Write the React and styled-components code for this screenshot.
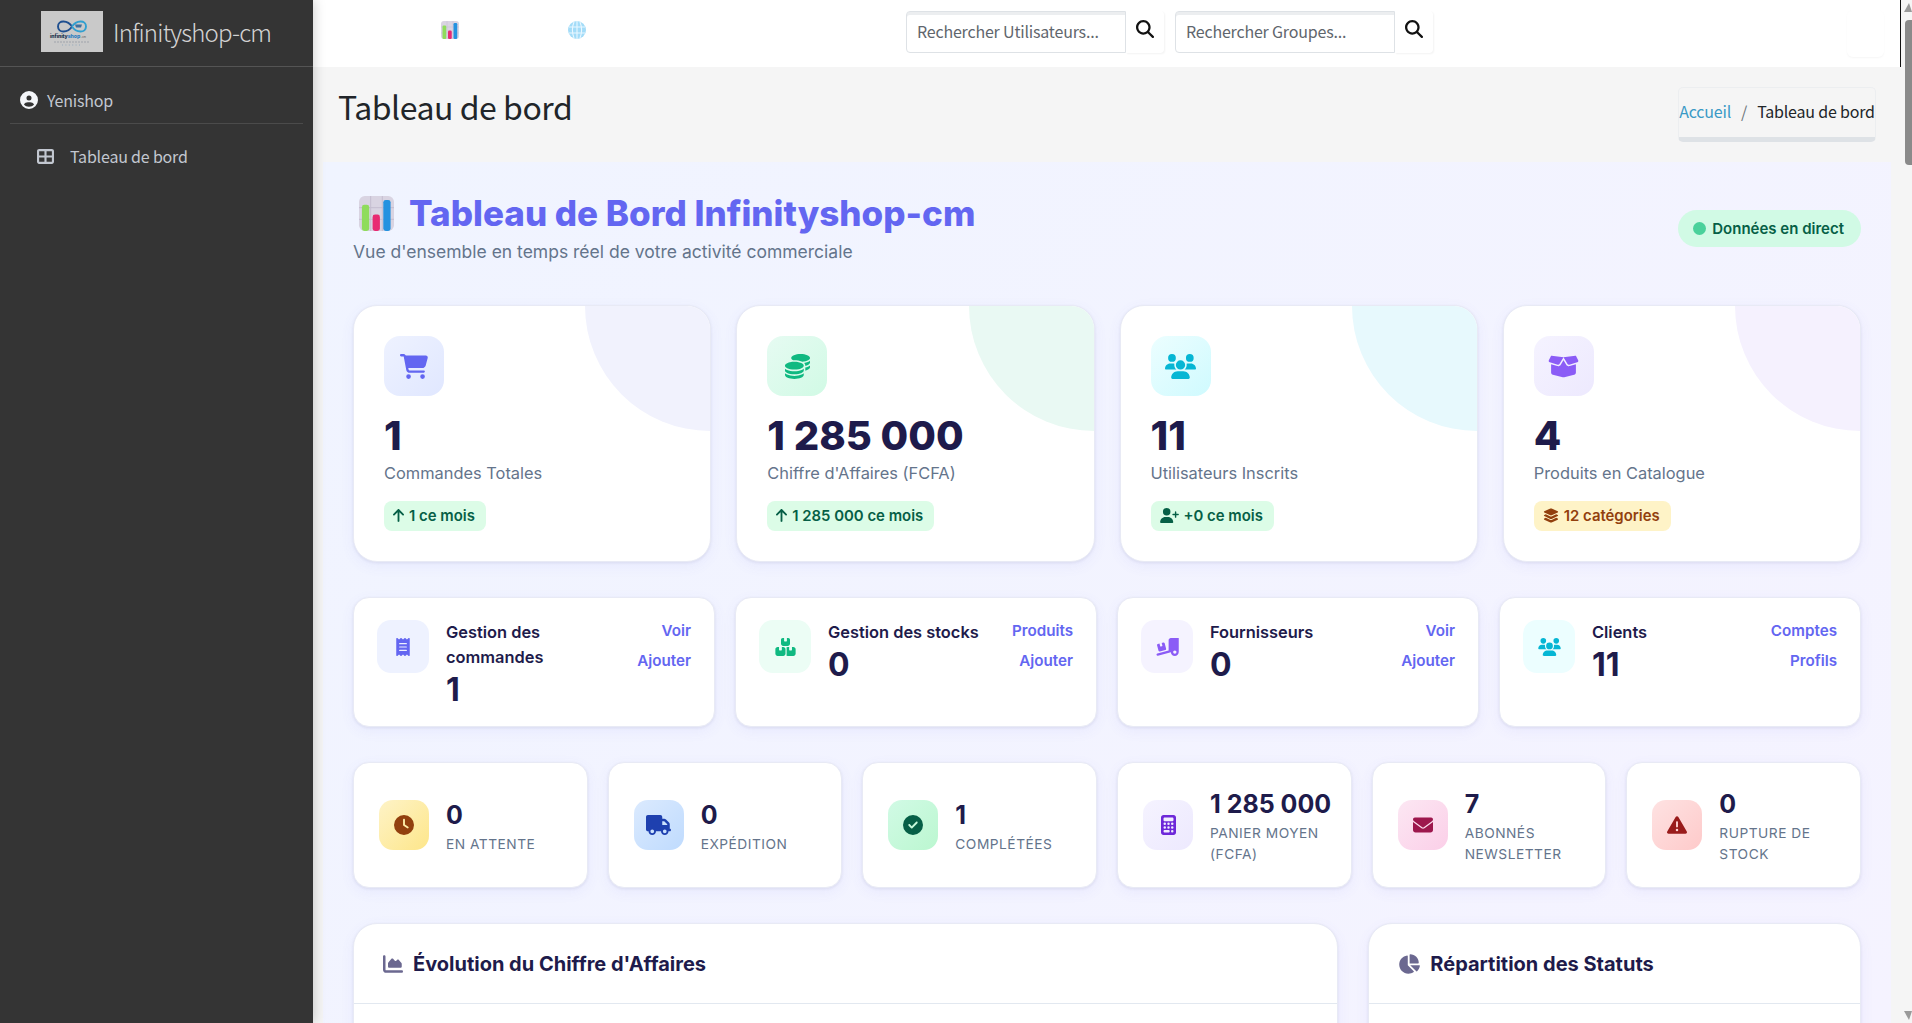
import styled, { createGlobalStyle } from 'styled-components';
import {
  FaArrowUp,
  FaBoxesStacked,
  FaBoxOpen,
  FaCalculator,
  FaCartShopping,
  FaChartArea,
  FaChartPie,
  FaCircleCheck,
  FaCircleUser,
  FaClock,
  FaCoins,
  FaEnvelope,
  FaLayerGroup,
  FaMagnifyingGlass,
  FaReceipt,
  FaTableCellsLarge,
  FaTriangleExclamation,
  FaTruck,
  FaTruckRampBox,
  FaUserPlus,
  FaUsers,
} from 'react-icons/fa6';

const GlobalStyle = createGlobalStyle`
  html, body {
    margin: 0;
    height: 100%;
    overflow: hidden;
    background: #f5f5f5;
    font-family: "Noto Sans CJK SC", "Noto Sans", sans-serif;
    letter-spacing: -0.012em;
  }
  * { box-sizing: border-box; }
`;

const inter = `Inter, "Liberation Sans", sans-serif`;

// w / bw: icon widths, the font awesome glyphs are not square
const stats = [
  { icon: <FaCartShopping />, w: 28, value: '1', label: 'Commandes Totales', from: '#eef2ff', to: '#e0e7ff', color: '#6366f1', blob: '#f1f2fd', badge: 'green', badgeIcon: <FaArrowUp />, bw: 11, badgeText: '1 ce mois' },
  { icon: <FaCoins />, w: 25, value: '1 285 000', label: "Chiffre d'Affaires (FCFA)", from: '#e6fbf2', to: '#d1fae5', color: '#10b981', blob: '#e9f9f3', badge: 'green', badgeIcon: <FaArrowUp />, bw: 11, badgeText: '1 285 000 ce mois' },
  { icon: <FaUsers />, w: 31, value: '11', label: 'Utilisateurs Inscrits', from: '#ecfeff', to: '#cffafe', color: '#06b6d4', blob: '#e7f9fd', badge: 'green', badgeIcon: <FaUserPlus />, bw: 19, badgeText: '+0 ce mois' },
  { icon: <FaBoxOpen />, w: 31, value: '4', label: 'Produits en Catalogue', from: '#f5f3ff', to: '#ede9fe', color: '#8b5cf6', blob: '#f5f1fe', badge: 'amber', badgeIcon: <FaLayerGroup />, bw: 16, badgeText: '12 catégories' },
];

const modules = [
  { icon: <FaReceipt />, w: 14, bg: '#eef2ff', color: '#6366f1', title: 'Gestion des commandes', value: '1', links: ['Voir', 'Ajouter'] },
  { icon: <FaBoxesStacked />, w: 21, bg: '#ecfdf5', color: '#10b981', title: 'Gestion des stocks', value: '0', links: ['Produits', 'Ajouter'] },
  { icon: <FaTruckRampBox />, w: 23, bg: '#f5f3ff', color: '#8b5cf6', title: 'Fournisseurs', value: '0', links: ['Voir', 'Ajouter'] },
  { icon: <FaUsers />, w: 23, bg: '#ecfeff', color: '#06b6d4', title: 'Clients', value: '11', links: ['Comptes', 'Profils'] },
];

const tiles = [
  { icon: <FaClock />, w: 20, from: '#fef3c7', to: '#fde68a', color: '#92400e', value: '0', label: 'En attente' },
  { icon: <FaTruck />, w: 25, from: '#dbeafe', to: '#bfdbfe', color: '#1e40af', value: '0', label: 'Expédition' },
  { icon: <FaCircleCheck />, w: 20, from: '#d1fae5', to: '#bbf7d0', color: '#065f46', value: '1', label: 'Complétées' },
  { icon: <FaCalculator />, w: 15, from: '#f5f3ff', to: '#ede9fe', color: '#6d28d9', value: '1 285 000', label: 'Panier moyen (FCFA)' },
  { icon: <FaEnvelope />, w: 20, from: '#fce7f3', to: '#fbcfe8', color: '#9d174d', value: '7', label: 'Abonnés Newsletter' },
  { icon: <FaTriangleExclamation />, w: 22, from: '#fee2e2', to: '#fecaca', color: '#991b1b', value: '0', label: 'Rupture de stock' },
];

const LogoMark = () => (
  <Logo viewBox="0 0 62 41" aria-label="Infinityshop">
    <rect width="62" height="41" fill="#c9c9c9" />
    <path d="M31 15.5C27 9 17 8.5 17 15.5S27 22 31 15.5" fill="none" stroke="#1f4f8f" strokeWidth="1.9" />
    <path d="M31 15.5C35 9 45 8.5 45 15.5S35 22 31 15.5" fill="none" stroke="#2f9fd0" strokeWidth="1.9" />
    <path d="M34 13.5h7l-1 3h-5z" fill="#3c6f9f" />
    <text x="9" y="27" fontFamily="Inter, sans-serif" fontSize="5.2" fontWeight="800" letterSpacing="-0.1" fill="#22324f">
      infinity<tspan fill="#2f7fc0">shop</tspan>
      <tspan fontSize="2.8" fontWeight="400" fill="#555"> -cm</tspan>
    </text>
    <path d="M13 31h36" stroke="#8d949e" strokeWidth=".7" strokeDasharray="2 1" />
    <path d="M21 34h20" stroke="#8ea6bb" strokeWidth=".9" strokeDasharray="1 2.4" />
  </Logo>
);

// bar chart emoji, the system one is not available here
const ChartEmoji = ({ size }) => (
  <svg width={size} height={size} viewBox="0 0 36 36">
    <rect width="36" height="36" rx="6" fill="#d9d4e2" />
    <path d="M0 12h36M0 24h36M12 0v36M24 0v36" stroke="#c4bdd0" strokeWidth="1" />
    <rect x="3" y="9" width="7.5" height="27" rx="2.5" fill="#8fdc5c" />
    <rect x="14" y="19" width="7.5" height="17" rx="2.5" fill="#e82a72" />
    <rect x="25" y="4" width="7.5" height="32" rx="2.5" fill="#2492e0" />
  </svg>
);

const GlobeEmoji = () => (
  <svg width="18" height="18" viewBox="0 0 18 18">
    <circle cx="9" cy="9" r="9" fill="#a3dcf8" />
    <path d="M1 6h16M1 12h16M6 1c-2 5-2 11 0 16M12 1c2 5 2 11 0 16M9 0v18" stroke="#eaf7ff" strokeWidth="1.1" fill="none" />
  </svg>
);

const App = () => {
  return (
    <Page>
      <GlobalStyle />
      <Sidebar>
        <Brand>
          <LogoMark />
          <BrandName>Infinityshop-cm</BrandName>
        </Brand>
        <UserPanel>
          <FaCircleUser />
          <span>Yenishop</span>
        </UserPanel>
        <MenuItem>
          <FaTableCellsLarge />
          <span>Tableau de bord</span>
        </MenuItem>
      </Sidebar>

      <Main>
        <Header>
          <NavIcons>
            <ChartEmoji size={18} />
            <GlobeEmoji />
          </NavIcons>
          <Searches>
            <SearchGroup>
              <SearchInput placeholder="Rechercher Utilisateurs..." />
              <SearchButton><FaMagnifyingGlass /></SearchButton>
            </SearchGroup>
            <SearchGroup>
              <SearchInput placeholder="Rechercher Groupes..." />
              <SearchButton><FaMagnifyingGlass /></SearchButton>
            </SearchGroup>
          </Searches>
          <CornerButton />
        </Header>

        <TitleBar>
          <PageTitle>Tableau de bord</PageTitle>
          <Breadcrumb>
            <a href="#accueil">Accueil</a>
            <Slash>/</Slash>
            <span>Tableau de bord</span>
          </Breadcrumb>
        </TitleBar>

        <Dashboard>
          <Hero>
            <div>
              <HeroTitle>
                <ChartEmoji size={35} />
                <span>Tableau de Bord Infinityshop-cm</span>
              </HeroTitle>
              <HeroSub>Vue d'ensemble en temps réel de votre activité commerciale</HeroSub>
            </div>
            <LivePill>
              <LiveDot />
              Données en direct
            </LivePill>
          </Hero>

          <StatsGrid>
            {stats.map((s) => (
              <StatCard key={s.label} $blob={s.blob}>
                <StatIcon $from={s.from} $to={s.to} $color={s.color} $w={s.w}>{s.icon}</StatIcon>
                <StatValue>{s.value}</StatValue>
                <StatLabel>{s.label}</StatLabel>
                <Badge $kind={s.badge} $w={s.bw}>
                  {s.badgeIcon}
                  {s.badgeText}
                </Badge>
              </StatCard>
            ))}
          </StatsGrid>

          <ModulesGrid>
            {modules.map((m) => (
              <ModuleCard key={m.title}>
                <ModuleIcon $bg={m.bg} $color={m.color} $w={m.w}>{m.icon}</ModuleIcon>
                <ModuleBody>
                  <ModuleTitle>{m.title}</ModuleTitle>
                  <ModuleValue>{m.value}</ModuleValue>
                </ModuleBody>
                <ModuleLinks>
                  {m.links.map((l) => (
                    <a key={l} href="#lien">{l}</a>
                  ))}
                </ModuleLinks>
              </ModuleCard>
            ))}
          </ModulesGrid>

          <TilesGrid>
            {tiles.map((t) => (
              <Tile key={t.label}>
                <TileIcon $from={t.from} $to={t.to} $color={t.color} $w={t.w}>{t.icon}</TileIcon>
                <TileText>
                  <TileValue>{t.value}</TileValue>
                  <TileLabel>{t.label}</TileLabel>
                </TileText>
              </Tile>
            ))}
          </TilesGrid>

          <ChartsGrid>
            <ChartCard>
              <ChartHead $w={20}>
                <FaChartArea />
                Évolution du Chiffre d'Affaires
              </ChartHead>
            </ChartCard>
            <ChartCard>
              <ChartHead $w={22}>
                <FaChartPie />
                Répartition des Statuts
              </ChartHead>
            </ChartCard>
          </ChartsGrid>
        </Dashboard>
      </Main>

      <ScrollTrack>
        <ScrollArrow />
        <ScrollThumb />
        <ScrollArrow $down />
      </ScrollTrack>
    </Page>
  );
};

export default App;

const Page = styled.div`
  display: flex;
  height: 100vh;
  overflow: hidden;
`;

/* sidebar */
const Sidebar = styled.aside`
  position: relative;
  z-index: 2;
  flex: 0 0 313px;
  background: #343434;
  box-shadow: 0 0 12px rgba(0, 0, 0, 0.22);
`;

const Brand = styled.div`
  display: flex;
  align-items: center;
  gap: 10px;
  height: 67px;
  padding: 0 0 3px 41px;
  border-bottom: 1px solid #545454;
`;

const Logo = styled.svg`
  width: 62px;
  height: 41px;
  flex: none;
`;

const BrandName = styled.span`
  color: rgba(255, 255, 255, 0.8);
  font-size: 24px;
  font-weight: 300;
  letter-spacing: -0.8px;
`;

const UserPanel = styled.div`
  display: flex;
  align-items: center;
  gap: 9px;
  height: 57px;
  margin: 0 10px;
  padding: 9px 0 0 10px;
  border-bottom: 1px solid #4b4b4b;
  color: #c2c7d0;
  font-size: 16px;

  svg {
    height: 18px;
    width: 18px;
    color: #f4f6f9;
  }
`;

const MenuItem = styled.div`
  display: flex;
  align-items: center;
  gap: 15px;
  margin-top: 20px;
  padding-left: 36px;
  color: #c2c7d0;
  font-size: 16px;

  svg {
    height: 17px;
    width: 19px;
  }
`;

/* top bar */
const Main = styled.main`
  flex: 1;
  min-width: 0;
  display: flex;
  flex-direction: column;
`;

const Header = styled.header`
  flex: 0 0 67px;
  display: flex;
  align-items: flex-start;
  background: #fff;
  border-right: 1px solid #111;
`;

const NavIcons = styled.div`
  display: flex;
  align-items: center;
  gap: 109px;
  margin: 21px 0 0 128px;
`;

const Searches = styled.div`
  display: flex;
  gap: 11px;
  margin: 11px 0 0 320px;
`;

const SearchGroup = styled.form`
  display: flex;
`;

const SearchInput = styled.input`
  width: 220px;
  height: 42px;
  padding: 0 10px 2px;
  border: 1px solid #dee2e6;
  border-radius: 4px 0 0 4px;
  box-shadow: inset 0 3px 0 #eceef0;
  background: #fff;
  font: 16px "Noto Sans CJK SC", sans-serif;
  letter-spacing: -0.012em;
  outline: none;

  &::placeholder {
    color: #5f666d;
    opacity: 1;
  }
`;

const SearchButton = styled.button`
  width: 38px;
  height: 42px;
  padding: 9px 0 0;
  display: flex;
  align-items: flex-start;
  justify-content: center;
  border: 0;
  border-radius: 0 4px 4px 0;
  background: #fff;
  box-shadow: 1px 1px 2px rgba(0, 0, 0, 0.05);
  color: #111;

  svg {
    width: 18px;
    height: 18px;
  }
`;

const CornerButton = styled.div`
  width: 37px;
  height: 47px;
  margin: 10px 16px 0 auto;
  border-radius: 6px;
  background: #fff;
  box-shadow: 0 1px 2px rgba(0, 0, 0, 0.04);
`;

/* page title */
const TitleBar = styled.div`
  flex: 0 0 95px;
  display: flex;
  justify-content: space-between;
  align-items: flex-start;
  padding: 0 25px;
  background: #f5f5f5;
`;

const PageTitle = styled.h1`
  margin: 16px 0 0;
  color: #212529;
  font-size: 32px;
  font-weight: 400;
  letter-spacing: -0.45px;
  line-height: 46px;
`;

const Breadcrumb = styled.nav`
  display: flex;
  align-items: center;
  gap: 10px;
  width: 198px;
  height: 55px;
  margin-top: 20px;
  padding-bottom: 3px;
  justify-content: center;
  border: 1px solid #eceef0;
  border-bottom: 5px solid #dee2e6;
  border-radius: 5px;
  color: #212529;
  font-size: 16px;

  a {
    color: #3a9ac6;
    text-decoration: none;
  }
`;

const Slash = styled.span`
  color: #6c757d;
`;

/* dashboard */
const Dashboard = styled.div`
  flex: 1;
  min-height: 0;
  margin: 0 10px;
  padding: 30px 30px 0;
  background: linear-gradient(135deg, #f0f4ff 0%, #f5f3ff 100%);
  font-family: ${inter};
  letter-spacing: normal;
`;

const Hero = styled.div`
  display: flex;
  justify-content: space-between;
  align-items: flex-start;
  margin-bottom: 40px;
`;

const HeroTitle = styled.h2`
  display: flex;
  align-items: center;
  gap: 15px;
  margin: 0 0 3px 6px;
  color: #6366f1;
  font-size: 35px;
  font-weight: 800;
  line-height: 43px;
`;

const HeroSub = styled.p`
  margin: 0;
  color: #64748b;
  font-size: 17.5px;
  line-height: 27px;
`;

const LivePill = styled.div`
  display: flex;
  align-items: center;
  gap: 6px;
  height: 37px;
  margin-top: 18px;
  padding: 0 17px 0 15px;
  border-radius: 20px;
  background: #d1fae5;
  color: #065f46;
  font-size: 15px;
  font-weight: 600;
`;

const LiveDot = styled.i`
  width: 13px;
  height: 13px;
  border-radius: 50%;
  background: #4ad19b;
`;

const cardShadow = `
  border: 1px solid #e8eaf5;
  background: #fff;
  box-shadow: 0 4px 14px rgba(99, 102, 241, 0.07), 0 1px 3px rgba(30, 27, 75, 0.08);
`;

const StatsGrid = styled.section`
  display: grid;
  grid-template-columns: repeat(4, minmax(0, 1fr));
  gap: 25px;
  margin-bottom: 35px;
`;

const StatCard = styled.article`
  position: relative;
  overflow: hidden;
  height: 257px;
  padding: 30px;
  border-radius: 24px;
  ${cardShadow}

  &::before {
    content: '';
    position: absolute;
    top: -125px;
    right: -125px;
    width: 250px;
    height: 250px;
    border-radius: 50%;
    background: ${(props) => props.$blob};
  }
`;

const StatIcon = styled.div`
  position: relative;
  display: flex;
  align-items: center;
  justify-content: center;
  width: 60px;
  height: 60px;
  border-radius: 16px;
  background: linear-gradient(135deg, ${(props) => props.$from}, ${(props) => props.$to});
  color: ${(props) => props.$color};

  svg {
    height: 25px;
    width: ${(props) => props.$w}px;
  }
`;

const StatValue = styled.div`
  position: relative;
  margin-top: 16px;
  color: #1e1b4b;
  font-size: 40px;
  font-weight: 800;
  line-height: 48px;
`;

const StatLabel = styled.div`
  color: #64748b;
  font-size: 16.4px;
  line-height: 26px;
`;

const Badge = styled.div`
  display: inline-flex;
  align-items: center;
  gap: 5px;
  height: 30px;
  margin-top: 15px;
  padding: 0 11px 1px 9px;
  border-radius: 8px;
  background: ${(props) => (props.$kind === 'amber' ? '#fef3c7' : '#dcfce7')};
  color: ${(props) => (props.$kind === 'amber' ? '#92400e' : '#065f46')};
  font-size: 14.9px;
  font-weight: 600;

  svg {
    height: 15px;
    width: ${(props) => props.$w}px;
  }
`;

const ModulesGrid = styled.section`
  display: grid;
  grid-template-columns: repeat(4, minmax(0, 1fr));
  gap: 20px;
  margin-bottom: 35px;
`;

const ModuleCard = styled.article`
  display: flex;
  align-items: flex-start;
  gap: 17px;
  padding: 22px 23px 21px;
  border-radius: 16px;
  ${cardShadow}
`;

const ModuleIcon = styled.div`
  flex: none;
  display: flex;
  align-items: center;
  justify-content: center;
  width: 52px;
  height: 53px;
  border-radius: 14px;
  background: ${(props) => props.$bg};
  color: ${(props) => props.$color};

  svg {
    height: 18px;
    width: ${(props) => props.$w}px;
  }
`;

const ModuleBody = styled.div`
  flex: 1;
  min-width: 0;
`;

const ModuleTitle = styled.div`
  color: #1e1b4b;
  font-size: 16.4px;
  font-weight: 600;
  line-height: 25px;
`;

const ModuleValue = styled.div`
  margin-top: 4px;
  color: #1e1b4b;
  font-size: 32px;
  font-weight: 700;
  line-height: 31px;
`;

const ModuleLinks = styled.div`
  display: flex;
  flex-direction: column;
  align-items: flex-end;
  gap: 8px;

  a {
    color: #6366f1;
    font-size: 15.2px;
    font-weight: 600;
    line-height: 22px;
    text-decoration: none;
  }
`;

const TilesGrid = styled.section`
  display: grid;
  grid-template-columns: repeat(6, minmax(0, 1fr));
  gap: 20px;
  margin-bottom: 35px;
`;

const Tile = styled.article`
  display: flex;
  align-items: center;
  gap: 17px;
  padding: 22px 25px;
  border-radius: 16px;
  ${cardShadow}
`;

const TileIcon = styled.div`
  flex: none;
  display: flex;
  align-items: center;
  justify-content: center;
  width: 50px;
  height: 50px;
  border-radius: 14px;
  background: linear-gradient(135deg, ${(props) => props.$from}, ${(props) => props.$to});
  color: ${(props) => props.$color};

  svg {
    height: 20px;
    width: ${(props) => props.$w}px;
  }
`;

const TileText = styled.div`
  min-width: 0;
  padding-top: 4px;
`;

const TileValue = styled.div`
  margin-bottom: 4px;
  color: #1e1b4b;
  font-size: 25px;
  font-weight: 700;
  line-height: 30px;
  white-space: nowrap;
`;

const TileLabel = styled.div`
  color: #64748b;
  font-size: 13.75px;
  letter-spacing: 0.5px;
  line-height: 21px;
  text-transform: uppercase;
`;

const ChartsGrid = styled.section`
  display: grid;
  grid-template-columns: 2fr 1fr;
  gap: 30px;
`;

const ChartCard = styled.article`
  height: 300px;
  border-radius: 24px;
  ${cardShadow}
`;

const ChartHead = styled.h3`
  display: flex;
  align-items: center;
  gap: 10px;
  height: 80px;
  margin: 0;
  padding: 0 29px;
  border-bottom: 1px solid #e2e8f0;
  color: #1e1b4b;
  font-size: 20px;
  font-weight: 700;

  svg {
    height: 20px;
    width: ${(props) => props.$w}px;
    color: #6b6890;
  }
`;

/* page scrollbar as it shows in the capture */
const ScrollTrack = styled.div`
  position: relative;
  flex: 0 0 11px;
  display: flex;
  flex-direction: column;
  justify-content: space-between;
  align-items: flex-end;
  padding: 3px 0;
  background: #f5f5f5;
`;

const ScrollArrow = styled.i`
  width: 0;
  height: 0;
  border-left: 5px solid transparent;
  border-right: 3px solid transparent;
  border-bottom: ${(props) => (props.$down ? '0' : '9px solid #9a9a9a')};
  border-top: ${(props) => (props.$down ? '9px solid #9a9a9a' : '0')};
`;

const ScrollThumb = styled.div`
  position: absolute;
  top: 20px;
  right: 0;
  width: 7px;
  height: 145px;
  border-radius: 4px 0 0 4px;
  background: #8a8a8a;
`;
